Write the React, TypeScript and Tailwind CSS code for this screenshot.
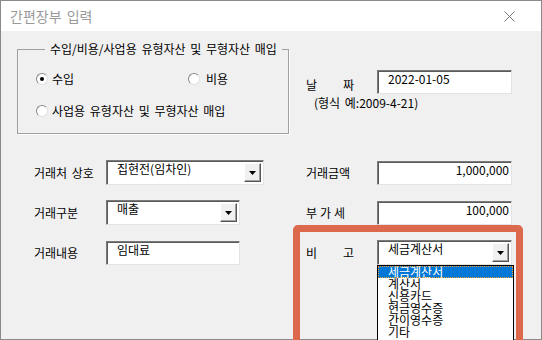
import React from "react";

const sunken =
  "bg-white border border-t-[#7a7a7a] border-l-[#7a7a7a] border-r-[#e3e3e3] border-b-[#e3e3e3] shadow-[inset_1px_1px_0_#5a5a5a]";

function DropBtn() {
  return (
    <div className="w-[17px] h-[19px] bg-[#f0f0f0] border border-t-[#ffffff] border-l-[#ffffff] border-r-[#555] border-b-[#555] shadow-[inset_-1px_-1px_0_#a0a0a0] flex items-center justify-center shrink-0">
      <svg width="7" height="4" viewBox="0 0 7 4">
        <polygon points="0,0 7,0 3.5,4" fill="#000" />
      </svg>
    </div>
  );
}

function Combo({ text, w }: { text: string; w: string }) {
  return (
    <div className={`${sunken} ${w} h-[25px] flex justify-between items-start p-[2px]`}>
      <span className="pl-[8px] leading-[14px] -mt-[1px]">{text}</span>
      <DropBtn />
    </div>
  );
}

function Input({ text, w, right }: { text: string; w: string; right?: boolean }) {
  return (
    <div className={`${sunken} ${w} h-[24px] flex ${right ? "justify-end pr-[2px]" : "pl-[10px]"} items-start`}>
      <span className="leading-[14px] pt-[1px]">{text}</span>
    </div>
  );
}

function Radio({ on }: { on?: boolean }) {
  return (
    <span className="w-[12px] h-[12px] rounded-full bg-white border border-t-[#8a8a8a] border-l-[#8a8a8a] border-r-[#e0e0e0] border-b-[#e0e0e0] flex items-center justify-center shrink-0">
      {on && <span className="w-[4px] h-[4px] rounded-full bg-black" />}
    </span>
  );
}

function Spread({ a, b, w }: { a: string; b: string; w: string }) {
  return (
    <span className={`flex justify-between ${w}`}>
      <span>{a}</span>
      <span>{b}</span>
    </span>
  );
}

export default function App() {
  const items = ["세금계산서", "계산서", "신용카드", "현금영수증", "간이영수증", "기타"];
  return (
    <div className="w-[542px] h-[340px] overflow-hidden font-['Noto_Sans_CJK_KR','Noto_Sans',sans-serif] text-[12px] text-black [word-spacing:2px]">
      <div className="relative w-full h-full border border-[#8a8a8a] bg-[#f0f0f0] flex flex-col">
        {/* title bar */}
        <div className="h-[30px] bg-white flex items-center justify-between pl-[9px] pr-[26px] shrink-0">
          <span className="text-[14px] text-[#9a9a9a] leading-none">간편장부 입력</span>
          <svg width="11" height="11" viewBox="0 0 11 11">
            <path d="M0.5 0.5 L10.5 10.5 M10.5 0.5 L0.5 10.5" stroke="#777" strokeWidth="1" />
          </svg>
        </div>

        {/* top section */}
        <div className="flex pt-[10px]">
          <fieldset className="ml-[16px] w-[272px] h-[93px] border border-[#a0a0a0] shadow-[1px_1px_0_#ffffff] pl-[18px] pt-[14px]">
            <legend className="ml-[9px] px-[5px] leading-[16px]">
              수입/비용/사업용 유형자산 및 무형자산 매입
            </legend>
            <div className="flex items-center h-[16px]">
              <div className="flex items-center w-[152px] gap-[4px]">
                <Radio on />
                <span>수입</span>
              </div>
              <div className="flex items-center gap-[6px]">
                <Radio />
                <span>비용</span>
              </div>
            </div>
            <div className="flex items-center h-[16px] mt-[16px] gap-[4px]">
              <Radio />
              <span>사업용 유형자산 및 무형자산 매입</span>
            </div>
          </fieldset>

          <div className="ml-[17px] pt-[29px] flex flex-col">
            <div className="flex items-center">
              <div className="w-[71px] pt-[6px]">
                <Spread a="날" b="짜" w="w-[48px]" />
              </div>
              <Input text="2022-01-05" w="w-[135px]" />
            </div>
            <div className="pl-[8px] leading-[14px] pt-[2px]">(형식 예:2009-4-21)</div>
          </div>
        </div>

        {/* rows */}
        <div className="grid grid-cols-[72px_200px_71px_135px] gap-y-[15px] ml-[33px] mt-[26px] items-center">
          <span className="pt-[1px]">거래처&nbsp;상호</span>
          <div>
            <Combo text="집현전(임차인)" w="w-[158px]" />
          </div>
          <span className="pt-[1px]">거래금액</span>
          <Input text="1,000,000" w="w-[135px]" right />

          <span>거래구분</span>
          <div>
            <Combo text="매출" w="w-[134px]" />
          </div>
          <span className="flex gap-[3px]">
            <span>부</span>
            <span>가</span>
            <span>세</span>
          </span>
          <Input text="100,000" w="w-[135px]" right />

          <span>거래내용</span>
          <div>
            <Input text="임대료" w="w-[134px]" />
          </div>
          <span>
            <Spread a="비" b="고" w="w-[48px]" />
          </span>
          <div className="relative">
            <Combo text="세금계산서" w="w-[135px]" />
            {/* open dropdown list */}
            <div className="absolute left-0 top-[25px] w-[137px] h-[90px] bg-white border border-black flex flex-col">
              {items.map((t, i) => (
                <div
                  key={t}
                  className={`h-[12px] leading-[12px] pl-[10px] whitespace-nowrap ${
                    i === 0
                      ? "bg-[#0078d7] text-white outline-1 outline-dotted outline-[#f0a030] -outline-offset-1"
                      : ""
                  }`}
                >
                  {t}
                </div>
              ))}
            </div>
          </div>
        </div>

        {/* orange annotation */}
        <div className="absolute left-[292px] top-[224px] w-[230px] h-[125px] border-[7px] border-[#dc694b] rounded-[5px] pointer-events-none" />
      </div>
    </div>
  );
}
